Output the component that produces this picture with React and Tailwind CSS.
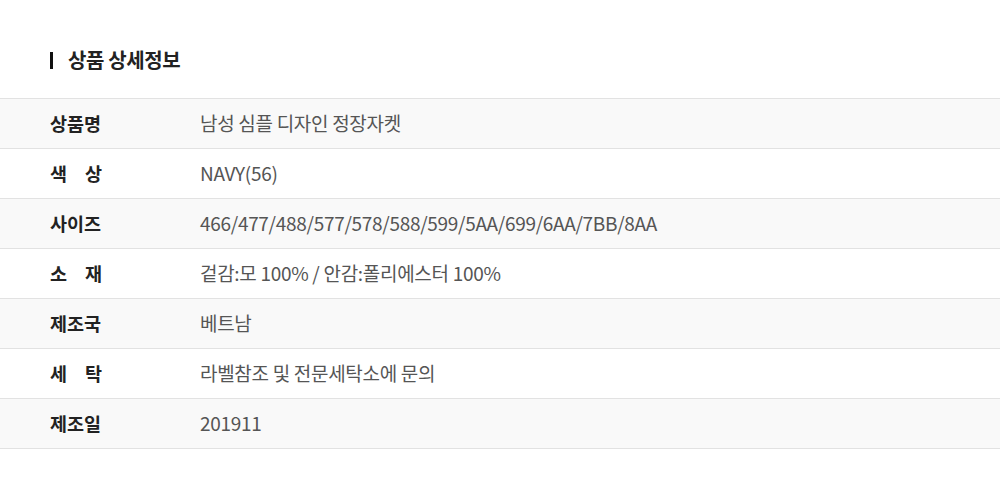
import React from "react";

const rows = [
  { label: ["상품명"], value: "남성 심플 디자인 정장자켓" },
  { label: ["색", "상"], value: "NAVY(56)" },
  { label: ["사이즈"], value: "466/477/488/577/578/588/599/5AA/699/6AA/7BB/8AA" },
  { label: ["소", "재"], value: "겉감:모 100% / 안감:폴리에스터 100%" },
  { label: ["제조국"], value: "베트남" },
  { label: ["세", "탁"], value: "라벨참조 및 전문세탁소에 문의" },
  { label: ["제조일"], value: "201911" },
];

const App = () => {
  return (
    <div
      className="w-[1000px] h-[498px] bg-white"
      style={{ fontFamily: '"Noto Sans CJK KR", "Noto Sans", sans-serif' }}
    >
      <div className="h-[98px] flex items-center pl-[50px] pt-[22px]">
        <div className="w-[3px] h-[17px] bg-[#111]" />
        <h2 className="ml-[15px] text-[20px] font-bold text-[#222] tracking-[-0.4px]">
          상품 상세정보
        </h2>
      </div>

      <div className="border-t border-[#e2e2e2]">
        {rows.map((row, i) => (
          <div
            key={i}
            className={`h-[50px] flex items-center border-b border-[#e2e2e2] ${
              i % 2 === 0 ? "bg-[#f9f9f9]" : "bg-white"
            }`}
          >
            <div className="w-[200px] pl-[50px] shrink-0">
              {row.label.length > 1 ? (
                <div className="w-[52px] flex justify-between text-[18.5px] font-bold text-[#222]">
                  {row.label.map((c, j) => (
                    <span key={j}>{c}</span>
                  ))}
                </div>
              ) : (
                <span className="text-[18.5px] font-bold text-[#222]">{row.label[0]}</span>
              )}
            </div>
            <div className="text-[19px] text-[#555] tracking-[-0.3px]">{row.value}</div>
          </div>
        ))}
      </div>
    </div>
  );
};

export default App;
